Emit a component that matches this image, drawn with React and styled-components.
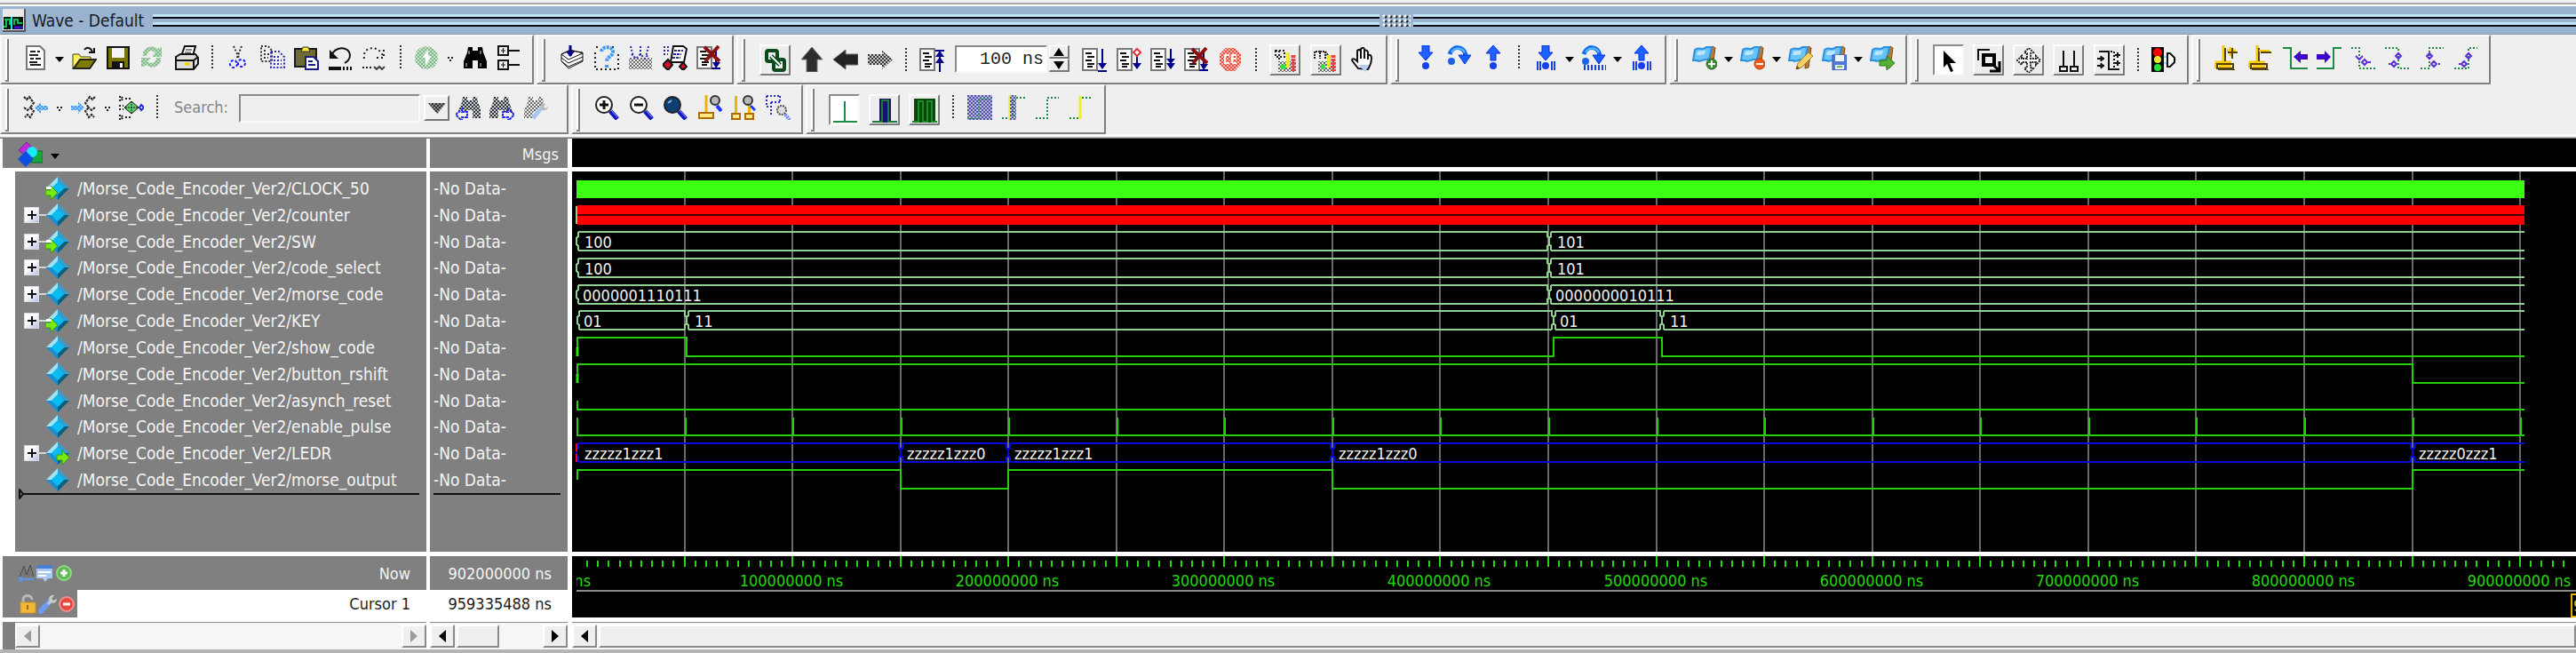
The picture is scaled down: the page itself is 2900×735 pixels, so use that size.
import React from 'react';
import styled, { createGlobalStyle, css } from 'styled-components';

const Global = createGlobalStyle`
  *, *::before, *::after { box-sizing: border-box; }
  html, body { margin: 0; height: 100%; background: #efefef; }
  body, button, input, table {
    font-family: 'DejaVu Sans Condensed', 'DejaVu Sans', 'Noto Sans', sans-serif;
    font-size: 18px;
  }
  #root { height: 100%; }
  button { font: inherit; border: 0; padding: 0; margin: 0; background: none; color: inherit; }
  svg { display: block; }
`;

const GREY = '#808080';
const NAVY = '#00008b';
const GREEN = '#1e8a44';

/* ---------- page frame ---------- */

const Page = styled.div`
  display: flex;
  flex-direction: column;
  min-height: 100%;
  overflow: hidden;
  background: #efefef;
`;

const TopEdge = styled.div`
  height: 7px;
  border-top: 3px solid #efefef;
  border-bottom: 2px solid #ffffff;
  background: #a8a8a8;
`;

const TitleBar = styled.header`
  display: flex;
  align-items: center;
  height: 32px;
  padding-left: 3px;
  background: #9ab3d1;
  border-bottom: 1px solid #8a98a8;
`;

const Title = styled.h1`
  margin: 0 10px 0 7px;
  font-size: 19px;
  font-weight: 400;
  line-height: 30px;
  color: #1a1a22;
  white-space: nowrap;
`;

const Rule = styled.div`
  flex: ${(p) => p.$grow} 1 0;
  height: 14px;
  background: linear-gradient(
    #bfe3f2 0 3px, #0c0c10 3px 5px, #9ab3d1 5px 9px, #bfe3f2 9px 12px, #0c0c10 12px 14px
  );
`;

const Grab = styled.div`
  width: 32px;
  height: 14px;
  margin: 0 3px;
  background:
    radial-gradient(circle at 2px 2px, #fff 1px, transparent 2px) 0 0 / 6px 5px,
    radial-gradient(circle at 4px 3px, #222 1px, transparent 2px) 0 0 / 6px 5px;
`;

/* ---------- toolbars ---------- */

const ToolRow = styled.div`
  display: flex;
  gap: 3px;
  height: 56px;
`;

const Group = styled.div`
  display: flex;
  flex: 0 0 ${(p) => p.$width}px;
  align-items: flex-start;
  justify-content: ${(p) => (p.$packed ? 'flex-start' : 'space-between')};
  padding: 10px 7px 0 4px;
  border: 2px solid ${GREY};
  border-top-color: #fafafa;
  border-left-color: #fafafa;
`;

const Grip = styled.div`
  flex: 0 0 4px;
  height: 48px;
  margin: -7px 11px 0 0;
  background: #ffffff;
  border-right: 2px solid ${GREY};
  border-bottom: 2px solid ${GREY};
`;

const Items = styled.div`
  display: flex;
  flex: 1;
  align-items: flex-start;
  justify-content: space-between;
`;

const Tool = styled.button`
  flex: 0 0 38px;
  display: flex;
  justify-content: center;
  padding-top: ${(p) => (p.$low ? 2 : 0)}px;
`;

const Raised = styled.button`
  flex: 0 0 35px;
  height: 35px;
  margin: -1px 5px 0;
  display: flex;
  align-items: center;
  justify-content: center;
  border: 2px solid;
  border-color: #fbfbfb #7c7c7c #7c7c7c #fbfbfb;
  background: #ededed;
  ${(p) => p.$pressed && css`
    border-color: #8c8c8c #f8f8f8 #f8f8f8 #8c8c8c;
    background: #ffffff;
  `}
`;

const Divider = styled.div`
  flex: 0 0 2px;
  height: 28px;
  margin: ${(p) => (p.$low ? 3 : 0)}px 9px 0;
  background: repeating-linear-gradient(#333 0 2px, transparent 2px 4px);
`;

const CaretButton = styled.button`
  flex: 0 0 16px;
  height: 28px;
  padding: 4px 0 0 3px;
`;

const Caret = ({ small, label }) => (
  <CaretButton aria-label={label}>
    <svg width="10" height="10" viewBox="0 0 10 10">
      {small
        ? <path d="M2 3h2M6 3h2M4 6h2" stroke="#222" strokeWidth="2" />
        : <path d="M0 2h10L5 8z" fill="#000" />}
    </svg>
  </CaretButton>
);

const TimeField = styled.div`
  display: flex;
  margin: 0 9px 0 7px;
  gap: 2px;
`;

const TimeInput = styled.input`
  width: 104px;
  height: 31px;
  padding: 0 2px;
  border: 2px solid;
  border-color: #8a8a8a #fafafa #fafafa #8a8a8a;
  border-radius: 0;
  font-family: 'Liberation Mono', monospace;
  font-size: 20px;
  text-align: right;
  color: #222;
  background: #fff;
`;

const Spinner = styled.div`
  display: flex;
  flex-direction: column;
  width: 23px;
`;

const Spin = styled.button`
  height: 15px;
  display: flex;
  align-items: center;
  justify-content: center;
  border: 1px solid;
  border-color: #fff #777 #777 #fff;
  border-bottom-width: 2px;
  border-right-width: 2px;
`;

const SearchLabel = styled.label`
  margin: 0 12px 0 9px;
  line-height: 28px;
  color: #858585;
`;

const SearchInput = styled.input`
  width: 204px;
  height: 32px;
  margin-top: -1px;
  padding: 0 4px;
  border: 2px solid;
  border-color: #8a8a8a #fafafa #fafafa #8a8a8a;
  border-radius: 0;
  background: #efefef;
`;

const DropButton = styled.button`
  width: 29px;
  height: 29px;
  margin: 0 2px 0 4px;
  display: flex;
  align-items: center;
  justify-content: center;
  border: 2px solid;
  border-color: #fff #777 #777 #fff;
`;

const ToolbarEdge = styled.div`
  height: 5px;
  border-top: 3px solid #fafafa;
  border-bottom: 1px solid #777;
  background: #b8b8b8;
`;

/* ---------- icons ---------- */

const DITHERS = {
  black: '#333333', green: '#7fb98a', blue: '#2b34e0', red: '#f04a3a',
  navy: '#5151a8', grey: '#9aa3ac', sky: '#3f96f0',
};

const PatternSheet = styled.svg`
  position: absolute;
`;

const Dithers = () => (
  <PatternSheet width="0" height="0" aria-hidden="true">
    <defs>
      {Object.entries(DITHERS).map(([k, c]) => (
        <pattern key={k} id={'d-' + k} width="4" height="4" patternUnits="userSpaceOnUse">
          <path d="M0 0h2v2H0zM2 2h2v2H2z" fill={c} />
        </pattern>
      ))}
    </defs>
  </PatternSheet>
);

const Svg = ({ children, ...rest }) => (
  <svg width="28" height="28" viewBox="0 0 28 28" fill="none" {...rest}>{children}</svg>
);

const Page16 = () => (
  <>
    <path d="M1 2h16v24H1z" fill="#fff" stroke="#7a7a7a" strokeWidth="2" />
    <path d="M4 7h7M6 11h8M4 15h7M6 19h8M6 22h6" stroke="#111" strokeWidth="2" />
  </>
);

const DownArrow = ({ extra }) => (
  <>
    <path d="M23 2v22" stroke={NAVY} strokeWidth="2" />
    <path d="M18 18h10l-5 7z" fill={NAVY} />
    {extra}
  </>
);

const Flag = ({ children }) => (
  <Svg>
    <path d="M23 1l3 2-3 22-4 1 1-22z" fill="#b87a35" stroke="#7d4a15" />
    <path d="M3 5c5-4 8 2 13-3l6 0-3 14c-5-2-8 4-14 1H1z" fill="#6cc3f8" stroke="#2b8fe0" strokeWidth="2" />
    <path d="M6 7c4-2 6 1 9-2l-1 5c-4 1-5 1-9 1z" fill="#bfe8ff" />
    {children}
  </Svg>
);

const Lens = ({ fill = '#fff', children }) => (
  <Svg>
    <path d="M18 18l8 9" stroke="#1414c8" strokeWidth="5" />
    <path d="M19 17l7 8" stroke="#8fa6ff" strokeWidth="1" />
    <circle cx="11" cy="11" r="9" fill={fill} stroke="#222" strokeWidth="2" />
    {children}
  </Svg>
);

const CursorPost = ({ x = 0, y = 0, w = 20 }) => (
  <g transform={`translate(${x} ${y})`}>
    <path d={`M${w / 2} 0V19`} stroke="#f0b400" strokeWidth="3" />
    <path d={`M2 20h${w - 4}v6h-${w - 4}z`} fill="#ffe88a" stroke="#b06a00" strokeWidth="2" />
  </g>
);

const YellowCursor = ({ children }) => (
  <Svg>
    <path d="M10 0V18M1 19h18M1 19v7" stroke="#f4cc00" strokeWidth="3" />
    <path d="M12 3V18M3 21h18v5H3zM4 28h19" stroke="#54420a" strokeWidth="2" />
    <path d="M5 22h14v3H5z" fill="#ffcf10" />
    {children}
  </Svg>
);

const BlueArrow = ({ up, y = 0 }) => (
  <path
    d={up ? 'M14 0l8 9h-5v8h-6V9H6z' : 'M10 0h8v8h4l-8 9-8-9h4z'}
    transform={`translate(0 ${y})`} fill="#1c62ff" stroke="#0a2be0"
  />
);

const Hop = () => (
  <>
    <path d="M3 10C6 0 19 0 21 11" stroke="#1268f0" strokeWidth="5" />
    <path d="M5 8C8 2 17 2 20 8" stroke="#56b8ff" strokeWidth="2" />
    <path d="M13 11h14l-7 10z" fill="#1660ff" stroke="#0a2be0" />
    <circle cx="5" cy="18" r="4" fill="#1c62e8" />
  </>
);

const Disk = ({ a = '#7a7400' }) => (
  <>
    <path d="M2 2h24v24H2z" fill={a} stroke="#111" strokeWidth="2" />
    <path d="M7 3h14v11H7z" fill="#f4f4f4" />
    <path d="M7 18h14v8H7z" fill="#111" />
    <path d="M16 20h3v5h-3z" fill="#fff" />
  </>
);

const Binoculars = ({ fill = '#000' }) => (
  <path d="M6 2h5v4h6V2h5l1 6 4 10v8H17v-9h-6v9H1v-8L5 8z" fill={fill} />
);

const I = {
  doc: <Svg><path d="M4 1h15l5 5v21H4z" fill="#fff" stroke="#777" strokeWidth="2" /><path d="M8 7h6M16 7h3M7 11h10M8 15h4M14 15h6M7 19h9M8 22h12" stroke="#222" strokeWidth="2" /></Svg>,
  open: <Svg><path d="M1 10h7l2 3h11v4H9L2 26H1z" fill="#fff35a" stroke="#444000" /><path d="M9 16h18l-7 10H2z" fill="#7f7a00" stroke="#222" strokeWidth="2" /><path d="M14 5c3-4 8-2 9 3M19 8h6V3" stroke="#111" strokeWidth="2" /></Svg>,
  save: <Svg><Disk /></Svg>,
  refresh: <Svg><path d="M4 13C3 2 16 0 20 5l5-2v11H14l4-5C13 5 9 7 8 13zM24 15c1 11-12 13-16 8l-6 3V15h11l-4 4c5 4 10 1 10-4z" fill="#b9dcbc" transform="translate(0 -1)" /><path d="M4 13C3 2 16 0 20 5l5-2v11H14l4-5C13 5 9 7 8 13zM24 15c1 11-12 13-16 8l-6 3V15h11l-4 4c5 4 10 1 10-4z" fill="url(#d-green)" transform="translate(0 -1)" /></Svg>,
  print: <Svg><path d="M8 12l4-11h12l-3 11z" fill="#fff" stroke="#111" strokeWidth="2" /><path d="M13 5h7M12 8h7" stroke="#111" /><path d="M2 13l5-3h17l3 4v7l-5 6H2z" fill="#ddd" stroke="#111" strokeWidth="2" /><path d="M2 17h20v9M22 17l5-4" stroke="#111" strokeWidth="2" /><path d="M12 21h6" stroke="#e8d800" strokeWidth="3" /></Svg>,
  cut: <Svg><path d="M9 1l7 15M18 1l-6 15" stroke="#333" strokeWidth="2" strokeDasharray="2 2" /><circle cx="9" cy="21" r="4" stroke="#1b1bff" strokeWidth="2" strokeDasharray="3 2" /><circle cx="18" cy="20" r="4" stroke="#1b1bff" strokeWidth="2" strokeDasharray="3 2" /></Svg>,
  copy: <Svg><path d="M1 1h8l4 5v12H1zM4 6h4M4 10h6M4 14h5" stroke="#333" strokeWidth="2" strokeDasharray="2 2" /><path d="M12 7h9l6 6v12H12zM15 13h8M15 17h9M15 21h9" stroke="#2b2bb0" strokeWidth="2" strokeDasharray="2 2" /></Svg>,
  paste: <Svg><path d="M1 4h24v20H1z" fill="#6f6b35" stroke="#1a1a1a" strokeWidth="2" /><path d="M8 7l2-5h6l2 5z" fill="#ffe83a" stroke="#333" /><path d="M13 13h9l5 5v9H13z" fill="#fff" stroke="#1b1b8c" strokeWidth="2" /><path d="M16 18h5M16 22h8" stroke="#1b1b8c" strokeWidth="2" /></Svg>,
  undo: <Svg><path d="M4 12C7 1 24 0 25 11c0 5-3 7-6 9" stroke="#111" strokeWidth="2" /><path d="M2 5v10h10z" fill="#111" /><path d="M1 26h14" stroke="#111" strokeWidth="4" /><path d="M17 26h10" stroke="#111" strokeWidth="4" strokeDasharray="2 2" /></Svg>,
  redo: <Svg><path d="M3 15C1 4 12 0 20 6l4 5M25 5v9h-8" stroke="#222" strokeWidth="2" strokeDasharray="2 3" /><path d="M1 25h12" stroke="#222" strokeWidth="2" strokeDasharray="2 2" /><path d="M14 24l3 3 3-3 3 3 3-3" stroke="#444" strokeWidth="2" /></Svg>,
  add: <Svg><circle cx="14" cy="14" r="12" fill="#c4e3c6" /><circle cx="14" cy="14" r="13" fill="url(#d-green)" /><path d="M16 5l-7 9h4v9l7-11h-4z" fill="#fff" /></Svg>,
  find: <Svg><Binoculars /><path d="M7 6v4M20 6v4M4 20v4M20 20v4" stroke="#ddd" /></Svg>,
  expand: <Svg><path d="M2 1h11v10H2zM2 17h11v10H2zM13 6h13M13 22h13" stroke="#111" strokeWidth="2" /><path d="M5 6h5M7.5 3v6M5 22h5M7.5 19v6" stroke="#111" strokeWidth="1" /></Svg>,
  books: <Svg><path d="M2 18l8 8 16-8V8L12 6 2 10z" fill="#fff" stroke="#111" strokeWidth="1" /><path d="M2 10l8 6 16-7M2 14l8 6 16-7M2 18l8 6 16-7" stroke="#111" strokeWidth="1" /><path d="M2 10l10-5 14 4" stroke="#111" strokeWidth="1" /><path d="M12 0v12" stroke={NAVY} strokeWidth="3" /><path d="M7 7h10l-5 6z" fill={NAVY} /></Svg>,
  question: <Svg><path d="M1 8v19h26V8M2 2h5M20 2h5" stroke="#222" strokeWidth="2" strokeDasharray="2 3" /><path d="M8 7c1-7 14-6 13 1-1 5-7 4-7 11M14 22v4" stroke="#3b98ff" strokeWidth="4" strokeDasharray="3 1" /></Svg>,
  simulate: <Svg><path d="M1 14h26v13H1z" fill="url(#d-black)" opacity=".7" /><path d="M3 1l3 12M14 1v12M23 1l-3 12M4 10l5 5 5-5 5 5 4-5" stroke="#2b2bb0" strokeWidth="2" strokeDasharray="2 2" /></Svg>,
  coverage: <Svg><path d="M1 2h8M1 6h6M1 10h5" stroke="#2b2b9a" strokeDasharray="2 2" strokeWidth="2" /><path d="M12 1h11l4 3-3 15H9z" fill="#fff" stroke="#111" strokeWidth="2" /><path d="M13 6h10M12 10h9M11 14h9" stroke="#2b2b9a" strokeWidth="2" strokeDasharray="3 1" /><path d="M6 16l5 6-5 6-6-6zM23 19l4 5-4 4-4-4z" fill="#d01030" stroke="#111" strokeWidth="2" /></Svg>,
  breakX: <Svg><Page16 /><path d="M22 4v20M17 26h10" stroke={NAVY} strokeWidth="2" /><path d="M18 19h9l-5 7z" fill={NAVY} /><path d="M9 2l17 16M25 1L10 18" stroke="#8c0e0e" strokeWidth="4" /></Svg>,
  link: <Svg><rect x="4" y="3" width="12" height="12" rx="2" stroke="#0b4a1b" strokeWidth="4" /><rect x="12" y="13" width="12" height="12" rx="2" stroke="#0b4a1b" strokeWidth="4" /><path d="M9 9l10 10" stroke="#0b4a1b" strokeWidth="5" /><path d="M9 9l10 10" stroke="#fff" strokeWidth="2" /></Svg>,
  up: <Svg><path d="M14 0l12 14h-6v14H8V14H2z" fill="#2c2c2c" stroke="#777" /></Svg>,
  left: <Svg><path d="M0 14L14 3v5h14v12H14v5z" fill="#222" stroke="#666" /></Svg>,
  right: <Svg><path d="M28 14L16 4v4H0v12h16v5z" fill="#c9c9c9" /><path d="M28 14L16 4v4H0v12h16v5z" fill="url(#d-black)" /></Svg>,
  restart: <Svg><Page16 /><path d="M23 4v24M18 4h10" stroke={NAVY} strokeWidth="2" /><path d="M18 11h10l-5-7zM18 18h10l-5-7z" fill={NAVY} /></Svg>,
  run: <Svg><Page16 /><DownArrow extra={<path d="M18 27h10" stroke={NAVY} strokeWidth="2" />} /></Svg>,
  runCont: <Svg><Page16 /><DownArrow extra={<path d="M23 2l4 4-4 4-4-4z" fill="#fff" stroke="#f03030" strokeWidth="2" />} /></Svg>,
  runAll: <Svg><Page16 /><DownArrow extra={<path d="M18 13h10l-5 6z" fill={NAVY} />} /></Svg>,
  stop: <Svg><path d="M9 1h10l7 7v11l-7 8H9l-7-8V8z" fill="#f8b8b0" /><path d="M9 1h10l7 7v11l-7 8H9l-7-8V8z" fill="url(#d-red)" /><path d="M8 9h5M8 9v9h5M16 9h5M16 13h5M16 18h5M16 9v9" stroke="#fff" strokeWidth="2" /></Svg>,
  profA: <Svg><path d="M3 3h10v7H3zM7 3v10" stroke="#222" strokeWidth="2" strokeDasharray="2 2" /><path d="M6 15h20v12H6z" fill="url(#d-black)" opacity=".7" /><path d="M9 21h5" stroke="#37e03c" strokeWidth="5" /><path d="M17 5v17" stroke="#f0ea30" strokeWidth="4" /><path d="M23 8v18" stroke="#f04040" strokeWidth="5" strokeDasharray="3 1" /></Svg>,
  profB: <Svg><path d="M2 12V4h6v8M8 4h6v8M14 4l5 7" stroke="#222" strokeWidth="2" strokeDasharray="2 1" /><path d="M6 15h20v12H6z" fill="url(#d-black)" opacity=".7" /><path d="M9 21h5" stroke="#37e03c" strokeWidth="5" /><path d="M18 8v14" stroke="#f0ea30" strokeWidth="4" /><path d="M23 8v18" stroke="#f04040" strokeWidth="5" strokeDasharray="3 1" /></Svg>,
  hand: <Svg><path d="M9 24L2 15c0-3 3-2 6 1V4c2-2 3-1 4 1V2c2-2 4-1 4 1v1c2-1 4 0 4 2v3c3-1 4 1 4 4 0 6-2 8-4 12z" fill="#fff" stroke="#111" strokeWidth="2" /><path d="M12 4v9M16 4v9M20 7v7" stroke="#111" strokeWidth="2" /><path d="M9 20h12l-4 8z" fill="#b5cdee" /></Svg>,
  stepIn: <Svg><BlueArrow /><circle cx="14" cy="23" r="4" fill="#1440ee" /></Svg>,
  stepOver: <Svg><Hop /></Svg>,
  stepOut: <Svg><BlueArrow up /><circle cx="14" cy="23" r="4" fill="#1440ee" /></Svg>,
  stepInC: <Svg><BlueArrow /><circle cx="14" cy="23" r="4" fill="#1440ee" /><path d="M5 18v10M8 18v10M21 18v10M24 18v10" stroke="#1440ee" strokeWidth="2" /></Svg>,
  stepOverC: <Svg><Hop /><path d="M3 25h25" stroke="#1440ee" strokeWidth="6" strokeDasharray="2 2" /></Svg>,
  stepOutC: <Svg><BlueArrow up /><circle cx="14" cy="23" r="4" fill="#1440ee" /><path d="M5 18v10M8 18v10M21 18v10M24 18v10" stroke="#1440ee" strokeWidth="2" /></Svg>,
  flagAdd: <Flag><circle cx="22" cy="21" r="6" fill="#3e8a36" stroke="#27691f" /><path d="M18 21h8M22 17v8" stroke="#fff" strokeWidth="2" /></Flag>,
  flagDel: <Flag><circle cx="22" cy="21" r="6" fill="#f0581c" stroke="#c43a08" /><path d="M18 21h8" stroke="#fff" strokeWidth="2" /></Flag>,
  flagEdit: <Flag><path d="M9 27l2-7L23 8l5 4-13 13z" fill="#f6d266" stroke="#b07a28" /><path d="M9 27l1-4 3 3z" fill="#6b3c10" /></Flag>,
  flagSave: <Flag><path d="M12 11h16v17H12z" fill="#5476d8" stroke="#3553b4" strokeWidth="1" /><path d="M15 11h10v7H15zM15 22h10v5H15z" fill="#eef2ff" /><path d="M17 24h6" stroke="#6ac04c" strokeWidth="2" /></Flag>,
  flagGo: <Flag><path d="M11 17h8v-5l9 8-9 8v-5h-8z" fill="#58b038" stroke="#2b7a1c" /></Flag>,
  select: <Svg><path d="M8 3v19l4-4 4 9 3-1-4-9h7z" fill="#000" /></Svg>,
  zoomMode: <Svg><path d="M2 14V2h13" stroke="#111" strokeWidth="2" /><path d="M8 8h12v11H8z" stroke="#000" strokeWidth="4" /><path d="M18 18l7 7M15 26h11V15" stroke="#000" strokeWidth="3" /></Svg>,
  pan: <Svg><path d="M14 0l5 5-3 1v6h6v-3l5 5-5 5v-3h-6v6l3 1-5 5-5-5 3-1v-6H6v3l-5-5 5-5v3h6V6L9 5z" stroke="#222" strokeWidth="2" strokeDasharray="2 1" fill="#fff" /></Svg>,
  twoCursor: <Svg><path d="M8 3v18M20 3v18M4 21h8v5H4zM16 21h8v5h-8z" stroke="#111" strokeWidth="2" /></Svg>,
  edit: <Svg><path d="M3 4h11v20h12" stroke="#111" strokeWidth="2" /><path d="M16 4h4v20" stroke="#111" strokeWidth="2" strokeDasharray="2 2" /><path d="M1 12h6M1 20h6M21 8h6M21 17h6M24 5v6M24 14v6" stroke="#111" strokeWidth="2" /><path d="M5 9l4 3-4 3zM5 17l4 3-4 3z" stroke="#111" fill="#111" /></Svg>,
  traffic: <Svg><path d="M0 0h14v28H0z" fill="#050505" /><circle cx="7" cy="6" r="5" fill="#f00" /><circle cx="7" cy="14" r="4" fill="#e8e832" /><circle cx="7" cy="23" r="4" fill="#28e038" /><path d="M14 11h5M14 18h5M25 14h3" stroke="#9cd4ec" strokeWidth="2" /><path d="M18 7h3l5 5v5l-5 5h-3z" fill="#fff" stroke="#111" strokeWidth="2" /></Svg>,
  curAdd: <YellowCursor><path d="M18 2v10M14 6h10" stroke="#f4cc00" strokeWidth="3" /><path d="M20 3v12M15 8h11" stroke="#54420a" strokeWidth="2" /></YellowCursor>,
  curDel: <YellowCursor><path d="M12 6h12" stroke="#f4cc00" strokeWidth="2" /><path d="M14 8h12" stroke="#54420a" strokeWidth="2" /></YellowCursor>,
  prevT: <Svg><path d="M0 3h9v23h19" stroke={GREEN} strokeWidth="2" /><path d="M12 13l8-7v4h8v6h-8v4z" fill="#3a06cc" /></Svg>,
  nextT: <Svg><path d="M0 26h19V3h9" stroke={GREEN} strokeWidth="2" /><path d="M16 13L9 6v4H0v6h9v4z" fill="#3a06cc" /></Svg>,
  fallA: <Svg><path d="M0 3h9v23h19" stroke={GREEN} strokeWidth="2" strokeDasharray="2 2" /><path d="M5 12l4 4 4-4M15 16l3 3-3 3-3-3zM19 19h3" stroke="#5a30d8" strokeWidth="2" /></Svg>,
  fallB: <Svg><path d="M0 3h15v23h13" stroke={GREEN} strokeWidth="2" strokeDasharray="2 2" /><path d="M15 9l3 3-3 3-3-3zM10 18l3 3-3 3-3-3zM4 21h2" stroke="#5a30d8" strokeWidth="2" /></Svg>,
  riseA: <Svg><path d="M1 26h10V3h16" stroke={GREEN} strokeWidth="2" strokeDasharray="2 2" /><path d="M11 9l3 3-3 3-3-3zM16 18l3 3-3 3-3-3zM21 21h2" stroke="#5a30d8" strokeWidth="2" /></Svg>,
  riseB: <Svg><path d="M1 26h16V3h10" stroke={GREEN} strokeWidth="2" strokeDasharray="2 2" /><path d="M17 9l3 3-3 3-3-3zM12 18l3 3-3 3-3-3zM6 21h2" stroke="#5a30d8" strokeWidth="2" /></Svg>,
  mergeL: <Svg><path d="M1 2l3 3 3-3 5 7-4 5 4 4-4 7-3-3-3 3M1 14l4 3 3-3" stroke="#222" strokeWidth="2" strokeDasharray="3 1" /><path d="M13 14l7-6v4h8v5h-8v4z" fill="#9cc8f4" /><path d="M13 14l7-6v4h8v5h-8v4z" fill="url(#d-sky)" /></Svg>,
  mergeR: <Svg><path d="M27 2l-3 3-3-3-5 7 4 5-4 4 4 7 3-3 3 3M27 14l-4 3-3-3" stroke="#222" strokeWidth="2" strokeDasharray="3 1" /><path d="M15 14L8 8v4H0v5h8v4z" fill="#9cc8f4" /><path d="M15 14L8 8v4H0v5h8v4z" fill="url(#d-sky)" /></Svg>,
  center: <Svg><path d="M1 1v6l4-3zM1 22v6l4-3zM7 4h8M7 25h8M0 12h5M0 16h5" stroke="#222" strokeWidth="2" strokeDasharray="2 2" /><path d="M14 7l8 7-8 7-8-7z" fill="#5fd070" stroke="#111" strokeWidth="1" /><path d="M14 7v14M7 14h14" stroke="#111" strokeDasharray="2 1" /><path d="M25 11l3 3-3 3-2-3z" fill="#fff" stroke="#2222ee" strokeWidth="2" /></Svg>,
  findPrev: <Svg><g transform="translate(2 0)"><Binoculars fill="#c3ccd4" /><Binoculars fill="url(#d-black)" /></g><path d="M0 22l7-6v3h6v6H7v4z" fill="#efefef" stroke="#2424f0" strokeWidth="2" strokeDasharray="3 1" /></Svg>,
  findNext: <Svg><g transform="translate(-1 0)"><Binoculars fill="#c3ccd4" /><Binoculars fill="url(#d-black)" /></g><path d="M28 22l-7-6v3h-6v6h6v4z" fill="#efefef" stroke="#2424f0" strokeWidth="2" strokeDasharray="3 1" /></Svg>,
  findOpt: <Svg><path d="M6 2h5v4h6V2h5l1 8-9 9-3 0v7H1v-8L5 8z" fill="url(#d-black)" opacity=".7" /><path d="M11 26l10-12" stroke="#a9c6ee" strokeWidth="5" /><path d="M20 15c-2-5 2-7 5-5l-2 3 2 2 3-2c0 4-5 6-8 2z" fill="#bbb" /></Svg>,
  zoomIn: <Lens><path d="M6 11h10M11 6v10" stroke="#111" strokeWidth="3" /></Lens>,
  zoomOut: <Lens><path d="M6 11h10" stroke="#111" strokeWidth="3" /></Lens>,
  zoomFull: <Lens fill="#0d3f70"><path d="M6 9l4-3" stroke="#7fb8e0" strokeWidth="2" /></Lens>,
  zoomCur: <Svg><CursorPost /><circle cx="20" cy="6" r="5" fill="#b8b8b8" stroke="#333" strokeWidth="2" /><path d="M22 12l5 6" stroke="#1b3cff" strokeWidth="4" /></Svg>,
  zoomTwo: <Svg><CursorPost y={1} w={13} x={-1} /><CursorPost y={1} w={13} x={14} /><circle cx="19" cy="6" r="5" fill="#b8b8b8" stroke="#333" strokeWidth="2" /><path d="M22 12l5 5" stroke="#1b3cff" strokeWidth="3" /></Svg>,
  zoomBox: <Svg><path d="M1 1h15M1 1v12h5M6 8h10M6 8v16M16 1v7" stroke="#2b2bc0" strokeWidth="2" strokeDasharray="2 2" /><circle cx="18" cy="17" r="5" fill="#ddd" stroke="#555" strokeWidth="2" strokeDasharray="2 1" /><path d="M22 22l5 6" stroke="#5f86ff" strokeWidth="4" strokeDasharray="2 1" /></Svg>,
  waveA: <Svg><path d="M14 4v23M1 27h27" stroke={GREEN} strokeWidth="2" /></Svg>,
  waveB: <Svg><path d="M8 1h13v27H8z" fill="#15156a" /><path d="M0 27h11V3h7v24h10" stroke="#1b7a3a" strokeWidth="2" /></Svg>,
  waveC: <Svg><path d="M2 1h24v27H2z" fill="#044a04" /><path d="M0 27h7V4h5v23h5V4h5v23h6" stroke="#1a8a2c" strokeWidth="2" /></Svg>,
  patA: <Svg><path d="M0 0h28v28H0z" fill="#b9b9dc" /><path d="M0 0h28v28H0z" fill="url(#d-navy)" /><path d="M0 26h13V4h14" stroke="#3f9c6a" strokeWidth="2" strokeDasharray="2 2" /></Svg>,
  patB: <Svg><path d="M9 0h8v28H9z" fill="#c6c6e4" /><path d="M9 0h8v28H9z" fill="url(#d-navy)" /><path d="M9 0v28" stroke="#f4ef50" strokeWidth="2" /><path d="M1 26h8M17 3h10M13 5v20" stroke={GREEN} strokeWidth="2" strokeDasharray="2 2" /></Svg>,
  patC: <Svg><path d="M1 26h13V3h13" stroke={GREEN} strokeWidth="2" strokeDasharray="2 2" /></Svg>,
  patD: <Svg><path d="M1 26h10M15 3h12" stroke={GREEN} strokeWidth="2" strokeDasharray="2 2" /><path d="M13 1v26" stroke="#f2ee20" strokeWidth="3" /></Svg>,
};

const T = ({ icon, label, low }) => <Tool $low={low} aria-label={label}>{I[icon]}</Tool>;
const R = ({ icon, label, pressed }) => <Raised $pressed={pressed} aria-label={label}>{I[icon]}</Raised>;

const ToolGroup = ({ width, label, packed, children }) => (
  <Group $width={width} $packed={packed} role="toolbar" aria-label={label}>
    <Grip />
    {packed ? children : <Items>{children}</Items>}
  </Group>
);

/* ---------- workspace ---------- */

const Workspace = styled.main`
  display: flex;
  flex: 1;
  min-height: 0;
  padding-left: 3px;
  background: #ffffff;
  border-bottom: 4px solid #b4b4b4;
`;

const Side = styled.section`
  display: flex;
  flex: 0 0 641px;
  flex-direction: column;
  padding-right: 5px;
`;

const Waves = styled.section`
  display: flex;
  flex: 1;
  flex-direction: column;
  min-width: 0;
`;

const SplitRow = styled.div`
  display: grid;
  grid-template-columns: 477px 155px;
  column-gap: 4px;
  height: ${(p) => p.$height}px;
  margin-bottom: ${(p) => p.$gap || 0}px;
`;

const HeadCell = styled.div`
  display: flex;
  align-items: center;
  justify-content: ${(p) => (p.$end ? 'flex-end' : 'flex-start')};
  gap: 6px;
  padding: 2px 10px 0 17px;
  background: ${GREY};
  color: #f2f2f2;
`;

const SignalArea = styled.div`
  flex: 1;
  min-height: 428px;
  margin-bottom: 5px;
  padding-top: 4px;
  background: linear-gradient(90deg,
    #fff 0 14px, ${GREY} 14px 477px, #fff 477px 481px, ${GREY} 481px);
`;

const SignalTable = styled.table`
  width: 636px;
  height: 358px;
  border-collapse: collapse;
  table-layout: fixed;
  color: #f4f4f4;
  font-size: 19px;
  line-height: 24px;

  th, td { padding: 0; font-weight: 400; text-align: left; white-space: nowrap; }
  th { width: 481px; }
  td { padding-left: 4px; }
`;

const SignalName = styled.div`
  display: flex;
  align-items: center;
  padding-left: 24px;
`;

const Toggle = styled.span`
  display: flex;
  flex: 0 0 25px;
  align-items: center;
  height: 18px;
`;

const ToggleButton = styled.button`
  flex: 0 0 17px;
  height: 18px;
  display: flex;
  align-items: center;
  justify-content: center;
  border: 1px solid #d8dbe6;
  background: linear-gradient(135deg, #fff 40%, #b8c2e4);
`;

const Stem = styled.span`
  flex: 1;
  height: 2px;
  background: #d4d4d4;
`;

const NameText = styled.span`
  margin-left: 9px;
`;

const InsertLine = styled.div`
  display: grid;
  grid-template-columns: 451px 143px;
  column-gap: 16px;
  align-items: center;
  height: 2px;
  padding-left: 18px;
`;

const Line = styled.div`
  display: flex;
  align-items: center;
  height: 2px;
  background: #111;
`;

const NowCell = styled.div`
  display: flex;
  align-items: center;
  justify-content: space-between;
  padding: 0 18px;
  background: ${(p) => (p.$light ? '#ffffff' : GREY)};
  color: ${(p) => (p.$light ? '#1c1c1c' : '#f4f4f4')};
  white-space: nowrap;
`;

const CursorCell = styled(NowCell)`
  padding-left: 0;
`;

const CursorTools = styled.div`
  display: flex;
  align-items: center;
  align-self: stretch;
  flex: 0 0 84px;
  padding-left: 18px;
  background: ${GREY};
`;

const IconButton = styled.button`
  width: 22px;
  height: 22px;
`;

const ScrollBar = styled.div`
  display: flex;
  gap: 2px;
  height: 31px;
  padding: 2px 0;
  border-left: ${(p) => (p.$inset ? 14 : 0)}px solid ${GREY};
  background: #f6f6f6;
  border-top: 1px solid #8c8c8c;
`;

const ScrollButton = styled.button`
  flex: 0 0 28px;
  display: flex;
  align-items: center;
  justify-content: center;
  border: 2px solid;
  border-color: #fff #8a8a8a #8a8a8a #fff;
  background: #efefef;
`;

const Thumb = styled.div`
  flex: ${(p) => (p.$width ? `0 0 ${p.$width}px` : '1')};
  border: 2px solid;
  border-color: #fff #8a8a8a #8a8a8a #fff;
  background: #efefef;
`;

const Track = styled.div`
  flex: 1;
`;

const Arrow = ({ dir, off, label }) => (
  <ScrollButton aria-label={label}>
    <svg width="8" height="14" viewBox="0 0 8 14">
      <path d={dir === 'left' ? 'M8 0v14L0 7z' : 'M0 0v14l8-7z'} fill={off ? '#9a9a9a' : '#000'} />
    </svg>
  </ScrollButton>
);

const WaveHead = styled.div`
  height: 32px;
  margin-bottom: 5px;
  background: #000;
`;

const WaveBody = styled.div`
  flex: 1;
  min-height: 428px;
  margin-bottom: 5px;
  background: #000;
  svg { width: 100%; height: 100%; }
`;

const Ruler = styled.div`
  height: 69px;
  margin-bottom: 5px;
  background: #000;
  svg { width: 100%; height: 100%; }
`;

const WaveText = styled.text`
  font-family: 'DejaVu Sans Condensed', 'DejaVu Sans', sans-serif;
  font-size: 18px;
  fill: ${(p) => p.$fill || '#f2f2f2'};
`;

/* ---------- data ---------- */

const PRE = '/Morse_Code_Encoder_Ver2/';
const SIGNALS = [
  { name: 'CLOCK_50', port: 'in' },
  { name: 'counter', bus: true },
  { name: 'SW', port: 'in', bus: true },
  { name: 'code_select', bus: true },
  { name: 'morse_code', bus: true },
  { name: 'KEY', port: 'in', bus: true },
  { name: 'show_code' },
  { name: 'button_rshift' },
  { name: 'asynch_reset' },
  { name: 'enable_pulse' },
  { name: 'LEDR', port: 'out', bus: true },
  { name: 'morse_output' },
];

/* time in millions of ns -> pixels */
const px = (t) => Math.round(5 + (t * 121.56) / 50);
const rowTop = (i) => Math.round(68 + (i - 2) * 29.75);
const END = 902;
const MAJORS = Array.from({ length: 18 }, (_, i) => (i + 1) * 50);

const Diamond = ({ port }) => (
  <svg width="26" height="26" viewBox="0 0 26 26">
    <path d="M13 0L0 13l6 0 7-7z" fill="#9fe4f6" />
    <path d="M13 0l13 13h-6l-7-7z" fill="#2f9fd4" />
    <path d="M0 13l13 13v-6l-7-7z" fill="#1590d4" />
    <path d="M26 13L13 26v-6l7-7z" fill="#06607f" />
    <path d="M13 6l7 7-7 7-7-7z" fill="#06bdf8" />
    {port && (
      <path
        d="M0 15h6v-5l8 8-8 8v-5H0z" transform={port === 'out' ? 'translate(12 0)' : 'translate(-1 0)'}
        fill="#7ae812" stroke="#2d9a10"
      />
    )}
    {port === 'in' && <path d="M0 11h6v3H0z" fill="#fff" />}
  </svg>
);

const Bus = ({ row, segs, color, pad = 9 }) => {
  const y = rowTop(row);
  return (
    <g>
      {segs.map(([from, to, text, shift = 0]) => {
        const a = px(from) + 2;
        const b = to === END ? px(END) : px(to) - 2;
        const tail = to === END ? '' : `v5l2 2v7l-2 2v5`;
        return (
          <g key={from}>
            <path
              d={`M${a} ${y + 21}H${b}M${a} ${y}H${b}${tail}M${a} ${y}v5l-2 2v7l2 2v5`}
              stroke={color} strokeWidth="2" fill="none" shapeRendering="crispEdges"
            />
            <WaveText x={px(from) + pad + shift} y={y + 18}>{text}</WaveText>
          </g>
        );
      })}
    </g>
  );
};

const Bit = ({ row, start, changes }) => {
  const y = rowTop(row);
  let level = start;
  let d = `M6 ${y + 11}V${level ? y : y + 21}`;
  changes.forEach((t) => {
    level = !level;
    d += `H${px(t)}V${level ? y : y + 21}`;
  });
  return <path d={`${d}H${px(END)}`} stroke="#26cf0c" strokeWidth="2" fill="none" shapeRendering="crispEdges" />;
};

const PALE = '#8fd08f';

const WaveView = () => (
  <svg role="img" aria-label="Signal waveforms">
    {MAJORS.map((t) => (
      <line key={t} x1={px(t)} x2={px(t)} y1="0" y2="100%" stroke="#6a6a6a" strokeWidth="2" shapeRendering="crispEdges" />
    ))}
    <rect x="5" y="10" width={px(END) - 5} height="20" fill="#3cff14" />
    <rect x="6" y="38" width={px(END) - 6} height="22" fill="#400" />
    <rect x="6" y="38" width={px(END) - 6} height="10" fill="#f00" />
    <rect x="6" y="50" width={px(END) - 6} height="10" fill="#f00" />
    <path d="M5 39v20" stroke={PALE} strokeWidth="2" />
    <Bus row={2} color={PALE} segs={[[0, 450.5, '100'], [450.5, END, '101']]} />
    <Bus row={3} color={PALE} segs={[[0, 450.5, '100'], [450.5, END, '101']]} />
    <Bus row={4} color={PALE} pad={7} segs={[[0, 450.5, '0000001110111'], [450.5, END, '0000000010111']]} />
    <Bus row={5} color={PALE} pad={7} segs={[[0.5, 51.2, '01'], [51.2, 452.3, '11', 2], [452.3, 502.5, '01'], [502.5, END, '11', 2]]} />
    <path d={`M6 ${rowTop(6) + 11}v10M6 ${rowTop(7) + 11}v10`} stroke="#2ee010" strokeWidth="3" />
    <Bit row={6} start changes={[51.2, 452.3, 502.5]} />
    <Bit row={7} start changes={[850]} />
    <Bit row={8} start={false} changes={[]} />
    <Bit row={9} start={false} changes={[]} />
    {[0, ...MAJORS].map((t) => (
      <path key={t} d={`M${px(t) + 1} ${rowTop(9) + 1}v20`} stroke="#26cf0c" strokeWidth="2" shapeRendering="crispEdges" />
    ))}
    <Bus
      row={10} color="#0808e0"
      segs={[[0, 150, 'zzzzz1zzz1'], [150, 200, 'zzzzz1zzz0', -2], [200, 350, 'zzzzz1zzz1', -2], [350, 850, 'zzzzz1zzz0', -2], [850, END, 'zzzzz0zzz1', -2]]}
    />
    <path d={`M5 ${rowTop(10)}v9m0 3v9`} stroke="#f00" strokeWidth="2" />
    <Bit row={11} start changes={[150, 200, 350, 850]} />
  </svg>
);

const RULE_GREEN = '#23d80c';

const RulerView = () => (
  <svg role="img" aria-label="Time ruler">
    <defs><clipPath id="ruler-clip"><rect x="5" y="0" width="100%" height="100%" /></clipPath></defs>
    {Array.from({ length: 184 }, (_, i) => i + 1).map((i) => (
      <path
        key={i} d={i % 10 ? `M${px(i * 5)} 5v7` : `M${px(i * 5)} 0v12`}
        stroke={RULE_GREEN} strokeWidth="2" shapeRendering="crispEdges"
      />
    ))}
    <g clipPath="url(#ruler-clip)" textAnchor="middle">
      {Array.from({ length: 10 }, (_, i) => i * 100).map((t) => (
        <WaveText key={t} x={px(t) - 1} y="34" $fill={RULE_GREEN}>{t ? `${t}000000 ns` : '0 ns'}</WaveText>
      ))}
    </g>
    <line x1="5" x2="100%" y1="39" y2="39" stroke="#8a8a8a" strokeWidth="2" />
    <rect x="2251" y="43" width="130" height="25" fill="#000" stroke="#e0b000" strokeWidth="2" />
    <WaveText x="2253" y="62" $fill="#e0c000">959335488 ns</WaveText>
  </svg>
);

const HeadIcon = () => (
  <svg width="28" height="28" viewBox="0 0 28 28">
    <path d="M1 9l9-9 7 7-9 8z" fill="#c02ad8" stroke="#7a1a90" />
    <path d="M15 10h13v13H15z" fill="#17a83c" stroke="#0b6a24" />
    <circle cx="16" cy="11" r="6" fill="#19e8ff" />
    <path d="M9 10l9 9-9 9-9-9z" fill="#0c4ee0" />
  </svg>
);

export default function App() {
  return (
    <Page>
      <Global />
      <Dithers />
      <TopEdge />
      <TitleBar>
        <svg width="26" height="26" viewBox="0 0 26 26">
          <path d="M0 0h26v26H0z" fill="#555" />
          <path d="M0 0h24v24H0z" fill="#e8e8e8" />
          <path d="M1 9h22v14H1z" fill="#04140c" />
          <path d="M1 20h3v-8h4v6M13 18v-6h4v4h5M2 12h3" stroke="#0ac050" strokeWidth="2" fill="none" />
          <path d="M10 9v14" stroke="#20e0f0" strokeWidth="2" />
          <path d="M13 21h10" stroke="#3a10c8" strokeWidth="3" />
        </svg>
        <Title>Wave - Default</Title>
        <Rule $grow={19} />
        <Grab />
        <Rule $grow={18} />
      </TitleBar>

      <ToolRow>
        <ToolGroup width={601} label="Standard">
          <T icon="doc" label="New" /><Caret label="New options" />
          <T icon="open" label="Open" /><T icon="save" label="Save" />
          <T icon="refresh" label="Reload" /><T icon="print" label="Print" />
          <Divider />
          <T icon="cut" label="Cut" /><T icon="copy" label="Copy" /><T icon="paste" label="Paste" />
          <T icon="undo" label="Undo" /><T icon="redo" label="Redo" />
          <Divider />
          <T icon="add" label="Add" /><Caret small label="Add options" />
          <T icon="find" label="Find" /><T icon="expand" label="Expand all" />
        </ToolGroup>
        <ToolGroup width={222} label="Compile">
          <T icon="books" label="Compile" /><T icon="question" label="Compile out of date" />
          <T icon="simulate" label="Compile all" /><T icon="coverage" label="Simulate" />
          <T icon="breakX" label="Break" />
        </ToolGroup>
        <ToolGroup width={733} label="Simulate">
          <R icon="link" label="Environment" />
          <T low icon="up" label="Up" /><T low icon="left" label="Back" /><T low icon="right" label="Forward" />
          <Divider $low />
          <T low icon="restart" label="Restart" />
          <TimeField>
            <TimeInput aria-label="Run length" defaultValue="100 ns" />
            <Spinner>
              <Spin aria-label="Increase"><svg width="12" height="9"><path d="M6 0l6 9H0z" /></svg></Spin>
              <Spin aria-label="Decrease"><svg width="12" height="9"><path d="M0 0h12L6 9z" /></svg></Spin>
            </Spinner>
          </TimeField>
          <T low icon="run" label="Run" /><T low icon="runCont" label="Continue run" />
          <T low icon="runAll" label="Run all" /><T low icon="breakX" label="Break run" />
          <T low icon="stop" label="Stop" />
          <Divider $low />
          <R icon="profA" label="Performance profiling" /><R icon="profB" label="Memory profiling" />
          <T low icon="hand" label="Edit breakpoint" />
        </ToolGroup>
        <ToolGroup width={311} label="Step">
          <T icon="stepIn" label="Step into" /><T icon="stepOver" label="Step over" /><T icon="stepOut" label="Step out" />
          <Divider />
          <T icon="stepInC" label="Step into current" /><Caret label="Step into options" />
          <T icon="stepOverC" label="Step over current" /><Caret label="Step over options" />
          <T icon="stepOutC" label="Step out current" />
        </ToolGroup>
        <ToolGroup width={268} label="Bookmarks">
          <T icon="flagAdd" label="Add bookmark" /><Caret label="Add bookmark options" />
          <T icon="flagDel" label="Delete bookmark" /><Caret label="Delete bookmark options" />
          <T icon="flagEdit" label="Manage bookmarks" />
          <T icon="flagSave" label="Save bookmark" /><Caret label="Save bookmark options" />
          <T icon="flagGo" label="Go to bookmark" />
        </ToolGroup>
        <ToolGroup width={314} label="Mouse mode">
          <R pressed icon="select" label="Select mode" /><R icon="zoomMode" label="Zoom mode" />
          <R icon="pan" label="Pan mode" /><R icon="twoCursor" label="Two cursor mode" />
          <R icon="edit" label="Edit mode" />
          <Divider $low />
          <T low icon="traffic" label="Stop drawing" />
        </ToolGroup>
        <ToolGroup width={337} label="Cursor">
          <T icon="curAdd" label="Insert cursor" /><T icon="curDel" label="Delete cursor" />
          <T icon="prevT" label="Previous transition" /><T icon="nextT" label="Next transition" />
          <T icon="fallA" label="Previous falling edge" /><T icon="fallB" label="Next falling edge" />
          <T icon="riseA" label="Previous rising edge" /><T icon="riseB" label="Next rising edge" />
        </ToolGroup>
      </ToolRow>

      <ToolRow>
        <ToolGroup packed width={640} label="Search">
          <T icon="mergeL" label="Event source" /><Caret small label="Source options" />
          <T icon="mergeR" label="Event driver" /><Caret small label="Driver options" />
          <T icon="center" label="Root cause" />
          <Divider />
          <SearchLabel htmlFor="wave-search">Search:</SearchLabel>
          <SearchInput id="wave-search" type="text" />
          <DropButton aria-label="Search history">
            <svg width="20" height="12"><path d="M0 0h20L10 12z" fill="#888" /><path d="M0 0h20L10 12z" fill="url(#d-black)" /></svg>
          </DropButton>
          <T icon="findPrev" label="Find previous" /><T icon="findNext" label="Find next" />
          <T icon="findOpt" label="Search options" />
        </ToolGroup>
        <ToolGroup width={261} label="Zoom">
          <T icon="zoomIn" label="Zoom in" /><T icon="zoomOut" label="Zoom out" /><T icon="zoomFull" label="Zoom full" />
          <T icon="zoomCur" label="Zoom on cursor" /><T icon="zoomTwo" label="Zoom between cursors" />
          <T icon="zoomBox" label="Zoom other" />
        </ToolGroup>
        <ToolGroup width={338} label="Expanded time">
          <R pressed icon="waveA" label="Expanded time off" /><R icon="waveB" label="Expanded time deltas" />
          <R icon="waveC" label="Expanded time events" />
          <Divider />
          <T icon="patA" label="Expand all time" /><T icon="patB" label="Expand time at cursor" />
          <T icon="patC" label="Collapse all time" /><T icon="patD" label="Collapse time at cursor" />
        </ToolGroup>
      </ToolRow>
      <ToolbarEdge />

      <Workspace>
        <Side>
          <SplitRow $height={33} $gap={4}>
            <HeadCell>
              <HeadIcon />
              <Caret label="Column options" />
            </HeadCell>
            <HeadCell $end>Msgs</HeadCell>
          </SplitRow>
          <SignalArea>
            <SignalTable>
              <tbody>
                {SIGNALS.map((s) => (
                  <tr key={s.name}>
                    <th scope="row">
                      <SignalName>
                        <Toggle>
                          {s.bus && (
                            <>
                              <ToggleButton aria-label={`Expand ${s.name}`}>
                                <svg width="10" height="10"><path d="M0 5h10M5 0v10" stroke="#111" strokeWidth="2" /></svg>
                              </ToggleButton>
                              <Stem />
                            </>
                          )}
                        </Toggle>
                        <Diamond port={s.port} />
                        <NameText>{PRE + s.name}</NameText>
                      </SignalName>
                    </th>
                    <td>-No Data-</td>
                  </tr>
                ))}
              </tbody>
            </SignalTable>
            <InsertLine>
              <Line>
                <svg width="6" height="12" viewBox="0 0 6 12"><path d="M1 1v10l4-5z" fill={GREY} stroke="#111" strokeWidth="2" /></svg>
              </Line>
              <Line />
            </InsertLine>
          </SignalArea>
          <SplitRow $height={38}>
            <NowCell>
              <svg width="62" height="24" viewBox="0 0 62 24">
                <path d="M1 16l5-12 3 10 4-11 4 13" fill="#777" stroke="#4a4a4a" strokeWidth="1" />
                <path d="M0 19h17M4 16l-4 3 4 3" stroke="#5b94e8" strokeWidth="2" fill="none" />
                <path d="M20 3h18v15h-5l-3 4-3-4h-7z" fill="#a9c8f4" />
                <path d="M20 3h18v4H20z" fill="#4b7fd0" />
                <path d="M22 11h14M22 15h9" stroke="#fff" strokeWidth="2" />
                <circle cx="51" cy="12" r="8" fill="#5cb850" stroke="#8fd884" strokeWidth="2" />
                <path d="M47 12h8M51 8v8" stroke="#fff" strokeWidth="3" />
              </svg>
              <span>Now</span>
            </NowCell>
            <NowCell><span />902000000 ns</NowCell>
          </SplitRow>
          <SplitRow $height={31} $gap={5}>
            <CursorCell $light>
              <CursorTools>
                <IconButton aria-label="Lock cursor">
                  <svg width="22" height="22" viewBox="0 0 22 22"><path d="M5 9V6c0-6 10-6 10 0" stroke="#b8b8b8" strokeWidth="3" fill="none" /><path d="M2 9h17v12H2z" fill="#f2b63a" stroke="#d08e1c" /><path d="M10 12v5" stroke="#a86a10" strokeWidth="2" /></svg>
                </IconButton>
                <IconButton aria-label="Edit cursor">
                  <svg width="22" height="22" viewBox="0 0 22 22"><path d="M3 19L12 9" stroke="#6f9cf0" strokeWidth="6" strokeLinecap="round" /><path d="M11 11l5-5" stroke="#ccc" strokeWidth="3" /><path d="M12 6c0-4 3-6 6-5l-3 4 2 2 4-2c0 4-4 6-7 4z" fill="#ccc" /></svg>
                </IconButton>
                <IconButton aria-label="Delete cursor 1">
                  <svg width="20" height="22" viewBox="0 0 20 22"><circle cx="10" cy="11" r="8" fill="#e84a42" stroke="#f0908a" strokeWidth="2" /><path d="M6 11h8" stroke="#fff" strokeWidth="3" /></svg>
                </IconButton>
              </CursorTools>
              <span>Cursor 1</span>
            </CursorCell>
            <NowCell $light><span />959335488 ns</NowCell>
          </SplitRow>
          <SplitRow $height={31}>
            <ScrollBar $inset>
              <Arrow off dir="left" label="Scroll names left" />
              <Track />
              <Arrow off dir="right" label="Scroll names right" />
            </ScrollBar>
            <ScrollBar>
              <Arrow dir="left" label="Scroll values left" />
              <Thumb $width={48} />
              <Track />
              <Arrow dir="right" label="Scroll values right" />
            </ScrollBar>
          </SplitRow>
        </Side>

        <Waves>
          <WaveHead />
          <WaveBody><WaveView /></WaveBody>
          <Ruler><RulerView /></Ruler>
          <ScrollBar>
            <Arrow dir="left" label="Scroll waves left" />
            <Thumb />
          </ScrollBar>
        </Waves>
      </Workspace>
    </Page>
  );
}
